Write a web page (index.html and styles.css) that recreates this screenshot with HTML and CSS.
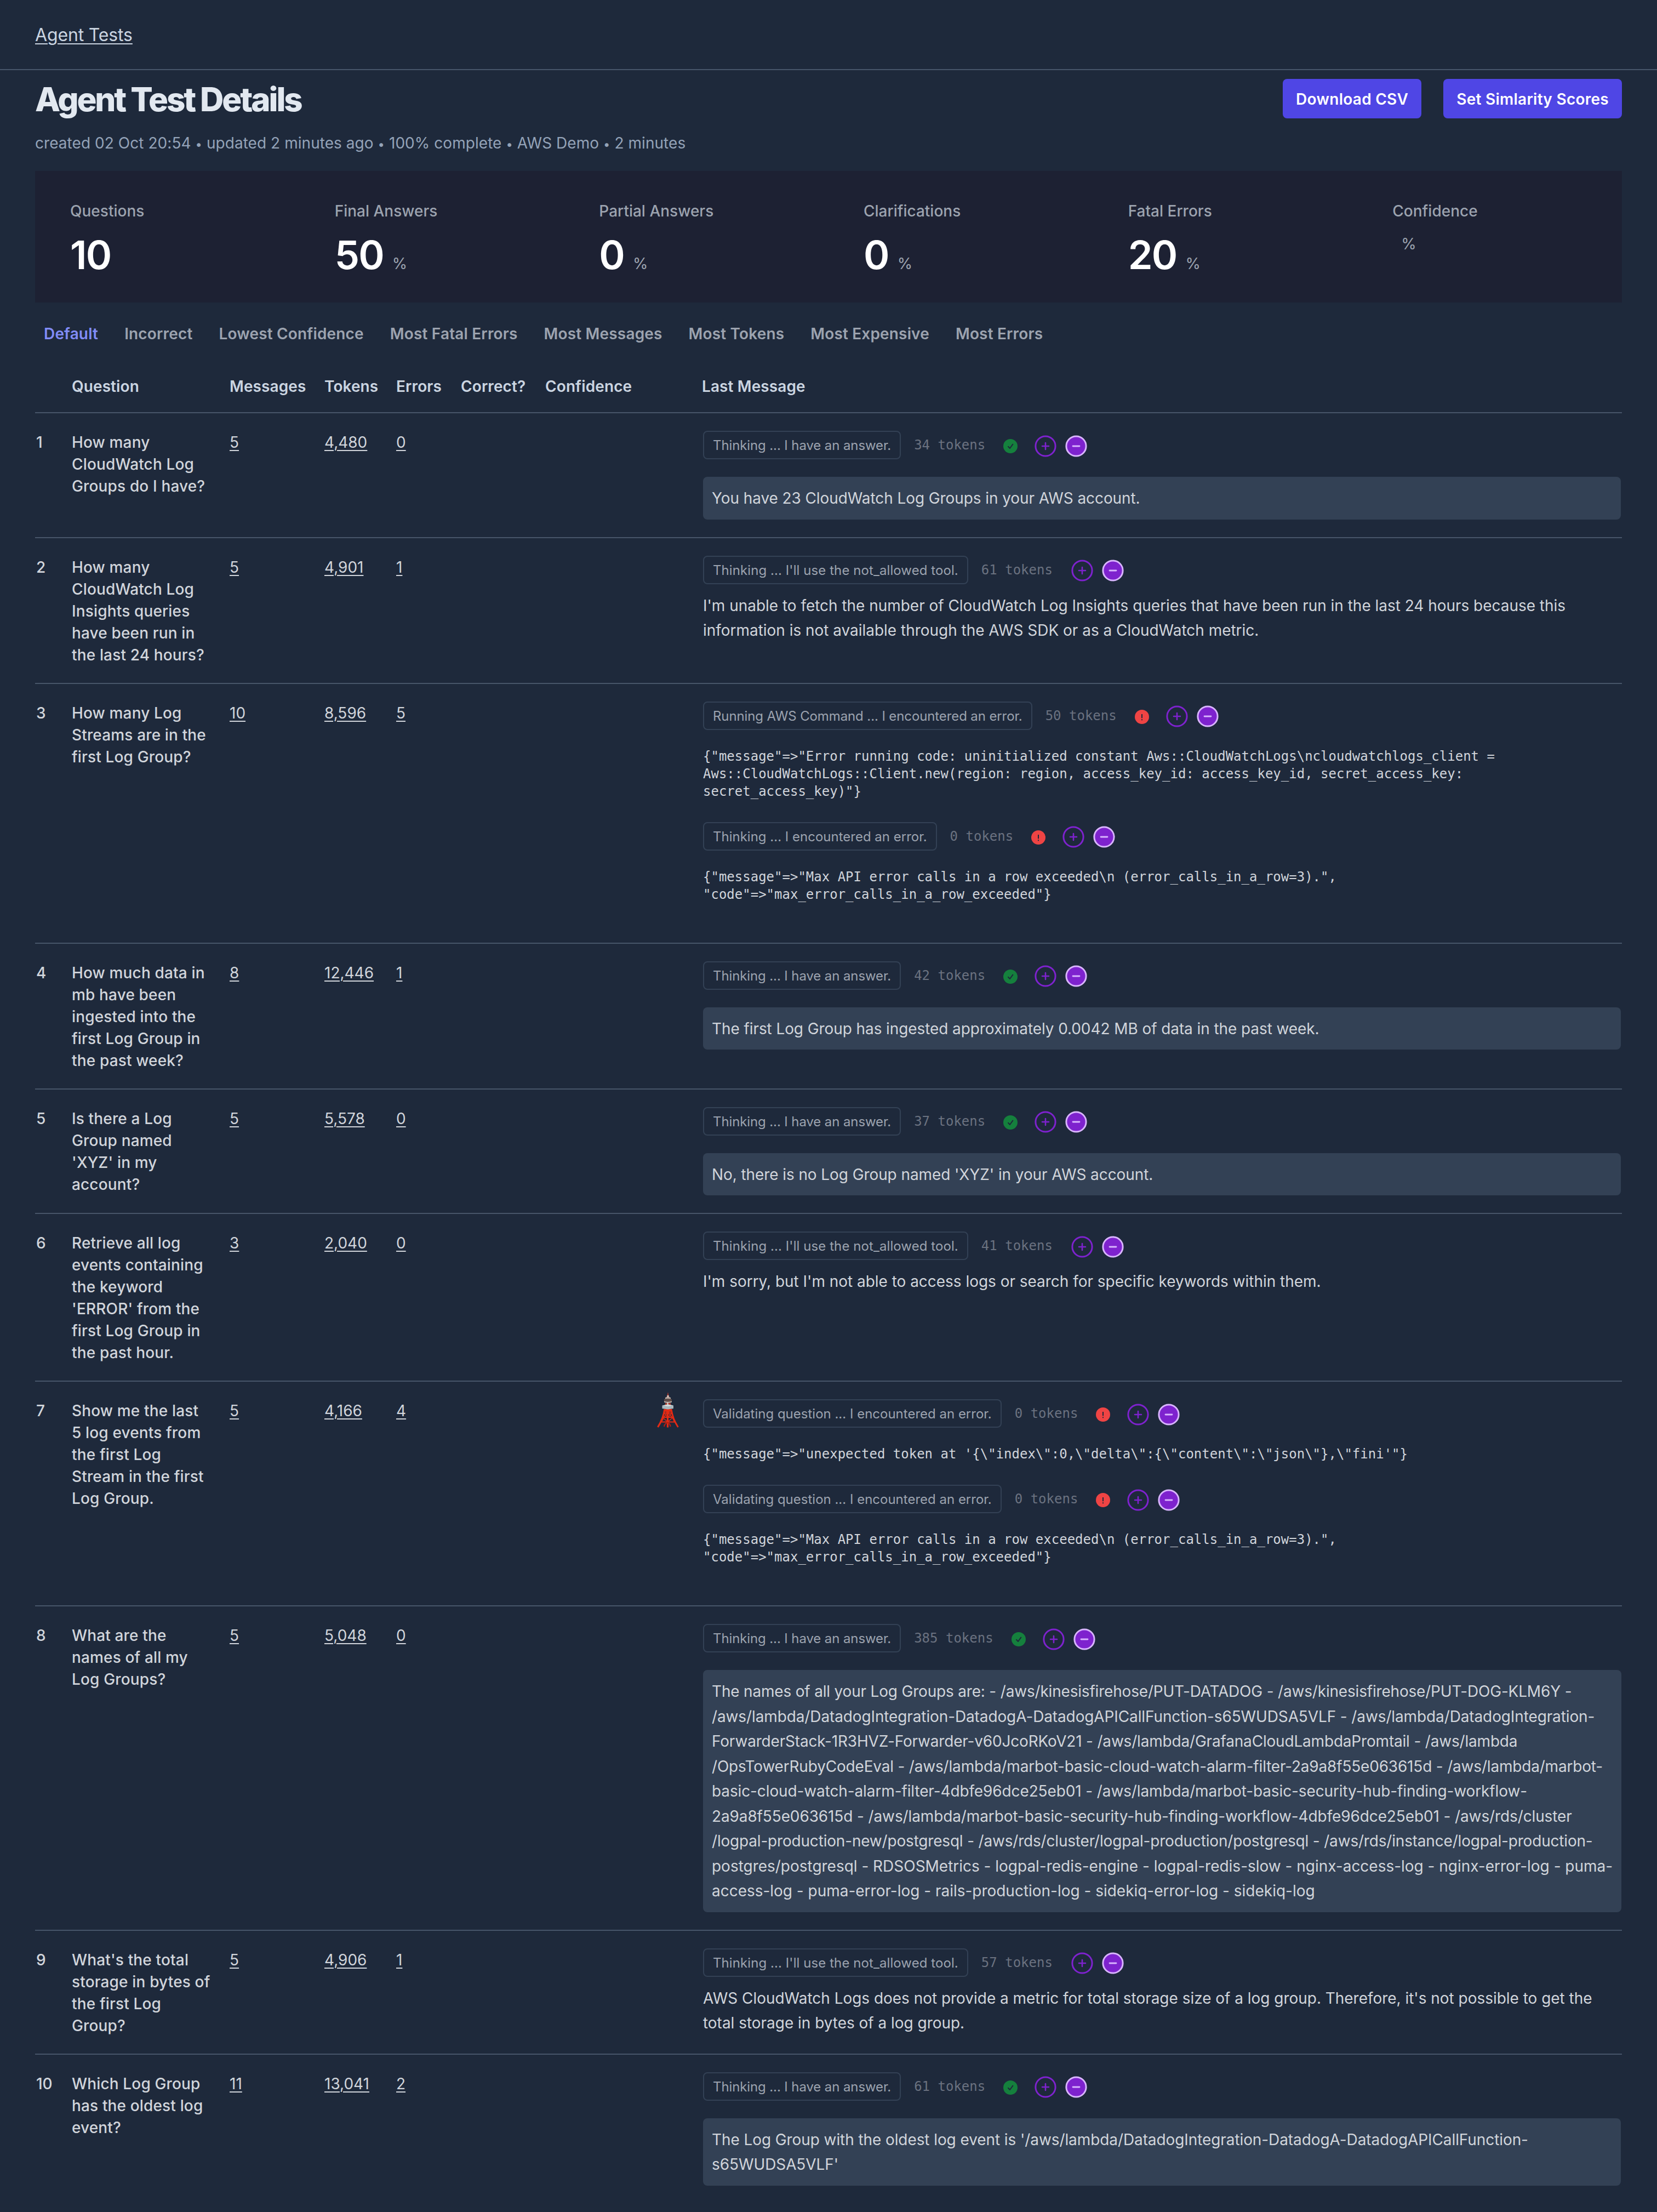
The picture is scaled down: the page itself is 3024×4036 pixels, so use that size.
FILE: index.html
```html
<!DOCTYPE html>
<html lang="en">
<head>
<meta charset="utf-8">
<title>Agent Test Details</title>
<link rel="stylesheet" href="styles.css">
</head>
<body>
<svg class="sprite" aria-hidden="true">
  <symbol id="check" viewBox="0 0 26 26"><circle cx="13" cy="13" r="13" fill="#15803d"/><path d="M9 13.8 12 17 17.3 9.6" fill="none" stroke="#1e293b" stroke-width="2" stroke-linecap="round" stroke-linejoin="round"/></symbol>
  <symbol id="alert" viewBox="0 0 26 26"><circle cx="13" cy="13" r="13" fill="#ef4444"/><path d="M13 8v7.2M13 17.2v2" fill="none" stroke="#1e293b" stroke-width="2"/></symbol>
  <symbol id="plus" viewBox="0 0 40 40"><circle cx="20" cy="20" r="18.1" fill="none" stroke="#7e22ce" stroke-width="3"/><path d="M14 20h12M20 14v12" fill="none" stroke="#7e22ce" stroke-width="2.6" stroke-linecap="round"/></symbol>
  <symbol id="minus" viewBox="0 0 40 40"><circle cx="20" cy="20" r="18.1" fill="#7e22ce" stroke="#d8b4fe" stroke-width="3"/><path d="M14 20h12" fill="none" stroke="#d8b4fe" stroke-width="2.8" stroke-linecap="round"/></symbol>
</svg>

<header class="topbar"><a class="link" href="#">Agent Tests</a></header>

<main class="page">
  <div class="heading">
    <h1 class="title">Agent Test Details</h1>
    <div class="actions">
      <a class="button" href="#">Download CSV</a>
      <a class="button" href="#">Set Simlarity Scores</a>
    </div>
  </div>
  <p class="meta">created 02 Oct 20:54 <span class="dot">•</span> updated 2 minutes ago <span class="dot">•</span> 100% complete <span class="dot">•</span> AWS Demo <span class="dot">•</span> 2 minutes</p>

  <section class="stats">
    <div class="stat"><p class="label">Questions</p><p class="figure"><span class="value">10</span></p></div>
    <div class="stat"><p class="label">Final Answers</p><p class="figure"><span class="value">50</span><span class="unit">%</span></p></div>
    <div class="stat"><p class="label">Partial Answers</p><p class="figure"><span class="value">0</span><span class="unit">%</span></p></div>
    <div class="stat"><p class="label">Clarifications</p><p class="figure"><span class="value">0</span><span class="unit">%</span></p></div>
    <div class="stat"><p class="label">Fatal Errors</p><p class="figure"><span class="value">20</span><span class="unit">%</span></p></div>
    <div class="stat"><p class="label">Confidence</p><p class="figure"><span class="unit">%</span></p></div>
  </section>

  <nav class="sorts">
    <a class="active">Default</a><a>Incorrect</a><a>Lowest Confidence</a><a>Most Fatal Errors</a><a>Most Messages</a><a>Most Tokens</a><a>Most Expensive</a><a>Most Errors</a>
  </nav>

  <section class="table">
    <div class="row head">
      <span></span><span>Question</span><span>Messages</span><span>Tokens</span><span>Errors</span><span>Correct?</span><span>Confidence</span><span></span><span>Last Message</span>
    </div>

    <div class="row">
      <span class="num">1</span><p class="question">How many<br>CloudWatch Log<br>Groups do I have?</p>
      <span><a class="link">5</a></span><span><a class="link">4,480</a></span><span><a class="link">0</a></span><span></span><span></span><span></span>
      <div class="last">
        <div class="status"><span class="badge done">Thinking ... I have an answer.</span><span class="tokens">34 tokens</span><svg class="state"><use href="#check"/></svg><svg class="vote"><use href="#plus"/></svg><svg class="vote"><use href="#minus"/></svg></div>
        <p class="answer">You have 23 CloudWatch Log Groups in your AWS account.</p>
      </div>
    </div>

    <div class="row">
      <span class="num">2</span><p class="question">How many<br>CloudWatch Log<br>Insights queries<br>have been run in<br>the last 24 hours?</p>
      <span><a class="link">5</a></span><span><a class="link">4,901</a></span><span><a class="link">1</a></span><span></span><span></span><span></span>
      <div class="last">
        <div class="status"><span class="badge tool">Thinking ... I'll use the not_allowed tool.</span><span class="tokens">61 tokens</span><svg class="vote"><use href="#plus"/></svg><svg class="vote"><use href="#minus"/></svg></div>
        <p class="plain">I'm unable to fetch the number of CloudWatch Log Insights queries that have been run in the last 24 hours because this<br>information is not available through the AWS SDK or as a CloudWatch metric.</p>
      </div>
    </div>

    <div class="row">
      <span class="num">3</span><p class="question">How many Log<br>Streams are in the<br>first Log Group?</p>
      <span><a class="link">10</a></span><span><a class="link">8,596</a></span><span><a class="link">5</a></span><span></span><span></span><span></span>
      <div class="last">
        <div class="status"><span class="badge done">Running AWS Command ... I encountered an error.</span><span class="tokens">50 tokens</span><svg class="state"><use href="#alert"/></svg><svg class="vote"><use href="#plus"/></svg><svg class="vote"><use href="#minus"/></svg></div>
        <pre class="trace">{"message"=&gt;"Error running code: uninitialized constant Aws::CloudWatchLogs\ncloudwatchlogs_client =
Aws::CloudWatchLogs::Client.new(region: region, access_key_id: access_key_id, secret_access_key:
secret_access_key)"}</pre>
        <div class="status"><span class="badge">Thinking ... I encountered an error.</span><span class="tokens">0 tokens</span><svg class="state"><use href="#alert"/></svg><svg class="vote"><use href="#plus"/></svg><svg class="vote"><use href="#minus"/></svg></div>
        <pre class="trace">{"message"=&gt;"Max API error calls in a row exceeded\n (error_calls_in_a_row=3).",
"code"=&gt;"max_error_calls_in_a_row_exceeded"}</pre>
      </div>
    </div>

    <div class="row">
      <span class="num">4</span><p class="question">How much data in<br>mb have been<br>ingested into the<br>first Log Group in<br>the past week?</p>
      <span><a class="link">8</a></span><span><a class="link">12,446</a></span><span><a class="link">1</a></span><span></span><span></span><span></span>
      <div class="last">
        <div class="status"><span class="badge done">Thinking ... I have an answer.</span><span class="tokens">42 tokens</span><svg class="state"><use href="#check"/></svg><svg class="vote"><use href="#plus"/></svg><svg class="vote"><use href="#minus"/></svg></div>
        <p class="answer">The first Log Group has ingested approximately 0.0042 MB of data in the past week.</p>
      </div>
    </div>

    <div class="row">
      <span class="num">5</span><p class="question">Is there a Log<br>Group named<br>'XYZ' in my<br>account?</p>
      <span><a class="link">5</a></span><span><a class="link">5,578</a></span><span><a class="link">0</a></span><span></span><span></span><span></span>
      <div class="last">
        <div class="status"><span class="badge done">Thinking ... I have an answer.</span><span class="tokens">37 tokens</span><svg class="state"><use href="#check"/></svg><svg class="vote"><use href="#plus"/></svg><svg class="vote"><use href="#minus"/></svg></div>
        <p class="answer">No, there is no Log Group named 'XYZ' in your AWS account.</p>
      </div>
    </div>

    <div class="row">
      <span class="num">6</span><p class="question">Retrieve all log<br>events containing<br>the keyword<br>'ERROR' from the<br>first Log Group in<br>the past hour.</p>
      <span><a class="link">3</a></span><span><a class="link">2,040</a></span><span><a class="link">0</a></span><span></span><span></span><span></span>
      <div class="last">
        <div class="status"><span class="badge tool">Thinking ... I'll use the not_allowed tool.</span><span class="tokens">41 tokens</span><svg class="vote"><use href="#plus"/></svg><svg class="vote"><use href="#minus"/></svg></div>
        <p class="plain">I'm sorry, but I'm not able to access logs or search for specific keywords within them.</p>
      </div>
    </div>

    <div class="row">
      <span class="num">7</span><p class="question">Show me the last<br>5 log events from<br>the first Log<br>Stream in the first<br>Log Group.</p>
      <span><a class="link">5</a></span><span><a class="link">4,166</a></span><span><a class="link">4</a></span><span></span><span></span>
      <span><svg class="tower" viewBox="0 0 40 65">
        <path d="M19 6 20 0 21 6 23 10H17z" fill="#e8452f"/>
        <path d="M18.4 6h3.2v3h-3.2z" fill="#c9c4c0"/>
        <path d="M15 10Q20 8 25 10V13H15z" fill="#b9afa8"/>
        <path d="M13 13Q20 10.500 27 13V17Q20 19.500 13 17z" fill="#5d4a47"/>
        <path d="M13 16.500Q20 19 27 16.500V18.500Q20 21 13 18.500z" fill="#c2b5ad"/>
        <path d="M15 20h10v6H15z" fill="#a8392c"/><path d="M18.500 19h2v7h-2z" fill="#e3ddd8"/>
        <g fill="none" stroke="#e32a14">
          <path d="M14 31C12 45 8 54 1.500 64M19.500 31V64.500" stroke-width="3.200"/>
          <path d="M26 31C28 45 32 54 38.500 64" stroke-width="2.800"/>
          <path d="M13 38h14M11.500 46H28.500M8 54.500H32" stroke-width="2.200"/>
          <path d="M14 31l5 7-7 8 7-1M26 31l-6 7 8 8-8-1M11 47l8 7M28 47l-8 7M13 38l6 7M27 38l-6 7M8 55l5-9M32 55l-4-9" stroke-width="1.500"/>
          <path d="M13 63q1-6 6-7.500Q24 57 24.500 63" stroke-width="2.200" stroke="#b91c0f"/>
        </g>
        <path d="M14 31h12l.6 5H13.300z" fill="#e32a14"/>
        <path d="M9.500 24.500 20 22.500 30 24.500V30L20 31.500 9.500 30z" fill="#a9b7bd"/><path d="M9.500 24.500 20 22.500 30 24.500 20 26z" fill="#d5dcdd"/>
      </svg></span>
      <div class="last">
        <div class="status"><span class="badge">Validating question ... I encountered an error.</span><span class="tokens">0 tokens</span><svg class="state"><use href="#alert"/></svg><svg class="vote"><use href="#plus"/></svg><svg class="vote"><use href="#minus"/></svg></div>
        <pre class="trace">{"message"=&gt;"unexpected token at '{\"index\":0,\"delta\":{\"content\":\"json\"},\"fini'"}</pre>
        <div class="status"><span class="badge">Validating question ... I encountered an error.</span><span class="tokens">0 tokens</span><svg class="state"><use href="#alert"/></svg><svg class="vote"><use href="#plus"/></svg><svg class="vote"><use href="#minus"/></svg></div>
        <pre class="trace">{"message"=&gt;"Max API error calls in a row exceeded\n (error_calls_in_a_row=3).",
"code"=&gt;"max_error_calls_in_a_row_exceeded"}</pre>
      </div>
    </div>

    <div class="row">
      <span class="num">8</span><p class="question">What are the<br>names of all my<br>Log Groups?</p>
      <span><a class="link">5</a></span><span><a class="link">5,048</a></span><span><a class="link">0</a></span><span></span><span></span><span></span>
      <div class="last">
        <div class="status"><span class="badge done">Thinking ... I have an answer.</span><span class="tokens">385 tokens</span><svg class="state"><use href="#check"/></svg><svg class="vote"><use href="#plus"/></svg><svg class="vote"><use href="#minus"/></svg></div>
        <p class="answer long">The names of all your Log Groups are: - /aws/kinesisfirehose/PUT-DATADOG - /aws/kinesisfirehose/PUT-DOG-KLM6Y -<br><span class="loose">/aws/lambda/DatadogIntegration-DatadogA-DatadogAPICallFunction-s65WUDSA5VLF - /aws/lambda/DatadogIntegration-</span><br>ForwarderStack-1R3HVZ-Forwarder-v60JcoRKoV21 - /aws/lambda/GrafanaCloudLambdaPromtail - /aws/lambda<br>/OpsTowerRubyCodeEval - /aws/lambda/marbot-basic-cloud-watch-alarm-filter-2a9a8f55e063615d - /aws/lambda/marbot-<br><span class="loose">basic-cloud-watch-alarm-filter-4dbfe96dce25eb01 - /aws/lambda/marbot-basic-security-hub-finding-workflow-<br>2a9a8f55e063615d - /aws/lambda/marbot-basic-security-hub-finding-workflow-4dbfe96dce25eb01 - /aws/rds/cluster</span><br>/logpal-production-new/postgresql - /aws/rds/cluster/logpal-production/postgresql - /aws/rds/instance/logpal-production-<br><span class="looser">postgres/postgresql - RDSOSMetrics - logpal-redis-engine - logpal-redis-slow - nginx-access-log - nginx-error-log - puma-<br>access-log - puma-error-log - rails-production-log - sidekiq-error-log - sidekiq-log</span></p>
      </div>
    </div>

    <div class="row">
      <span class="num">9</span><p class="question">What's the total<br>storage in bytes of<br>the first Log<br>Group?</p>
      <span><a class="link">5</a></span><span><a class="link">4,906</a></span><span><a class="link">1</a></span><span></span><span></span><span></span>
      <div class="last">
        <div class="status"><span class="badge tool">Thinking ... I'll use the not_allowed tool.</span><span class="tokens">57 tokens</span><svg class="vote"><use href="#plus"/></svg><svg class="vote"><use href="#minus"/></svg></div>
        <p class="plain">AWS CloudWatch Logs does not provide a metric for total storage size of a log group. Therefore, it's not possible to get the<br>total storage in bytes of a log group.</p>
      </div>
    </div>

    <div class="row">
      <span class="num">10</span><p class="question">Which Log Group<br>has the oldest log<br>event?</p>
      <span><a class="link">11</a></span><span><a class="link">13,041</a></span><span><a class="link">2</a></span><span></span><span></span><span></span>
      <div class="last">
        <div class="status"><span class="badge done">Thinking ... I have an answer.</span><span class="tokens">61 tokens</span><svg class="state"><use href="#check"/></svg><svg class="vote"><use href="#plus"/></svg><svg class="vote"><use href="#minus"/></svg></div>
        <p class="answer">The Log Group with the oldest log event is '/aws/lambda/DatadogIntegration-DatadogA-DatadogAPICallFunction-<br>s65WUDSA5VLF'</p>
      </div>
    </div>
  </section>
</main>
</body>
</html>
```
FILE: styles.css
```css
* { box-sizing: border-box; margin: 0; }
html { background: #1e293b; }
body {
  background: #1e293b;
  color: #d1d5db;
  font: 400 28px/40px Inter, sans-serif;
  height: 4036px;
  overflow: hidden;
}
.sprite { display: none; }
svg { display: block; flex: none; }

.link {
  color: inherit;
  text-decoration: underline;
  text-decoration-thickness: 2px;
  text-underline-offset: 4px;
}
.topbar {
  height: 128px;
  padding: 40px 64px;
  border-bottom: 2px solid #475569;
  color: #cbd5e1;
  font-size: 32px;
  line-height: 48px;
  letter-spacing: -0.15px;
}
.page { padding: 16px 64px 0; }

.heading { display: flex; justify-content: space-between; height: 72px; }
.title { padding-top: 1px; color: #e2e8f0; font-size: 60px; line-height: 72px; font-weight: 800; letter-spacing: -3.1px; }
.actions { display: flex; gap: 40px; }
.button {
  padding: 17px 24px 15px;
  border-radius: 8px;
  background: #4f46e5;
  color: #fff;
  font-weight: 600;
  letter-spacing: 0.26px;
  text-decoration: none;
}
.meta { height: 40px; margin-top: 25px; color: #94a3b8; letter-spacing: 0.05px; }
.dot { font-size: 22px; line-height: 0; }

.stats {
  display: grid;
  grid-template-columns: repeat(6, 1fr);
  margin-top: 31px;
  background: #1d2133;
}
.stat { height: 240px; padding: 49px 64px 47px; }
.label { color: #9ca3af; font-weight: 500; line-height: 48px; }
.figure { display: flex; align-items: baseline; margin-top: 16px; }
.value { color: #fff; font-size: 72px; line-height: 80px; font-weight: 600; letter-spacing: -0.025em; }
.unit { margin-left: 16px; color: #9ca3af; }

.sorts {
  display: flex;
  gap: 48px;
  padding: 37px 16px 0;
  color: #9ca3af;
  font-weight: 600;
  letter-spacing: 0.16px;
}
.sorts .active { color: #818cf8; }

.table { margin-top: 31px; }
.row {
  display: grid;
  grid-template-columns: 67px 288px 173px 131px 118px 154px 204px 82px 1fr;
  padding: 33px 0 31px;
  border-bottom: 2px solid #475569;
  white-space: nowrap;
}
.row:last-child { border-bottom: 0; }
.head { padding: 25px 0 27px; color: #cbd5e1; font-weight: 600; letter-spacing: 0.1px; }
.num { padding-left: 2px; font-weight: 500; }
.question { font-weight: 500; letter-spacing: 0.15px; }

.last { margin: -1px 0 1px; padding: 0 2px; }
.status { display: flex; align-items: center; }
.badge {
  height: 52px;
  padding: 0 16px;
  border: 2px solid #334155;
  border-radius: 8px;
  color: #9ca3af;
  font-size: 24px;
  line-height: 49px;
}
.badge.done { letter-spacing: -0.11px; }
.badge.tool { letter-spacing: 0.08px; }
.tokens { margin: 0 34px 0 24px; color: #6b7280; font: 24px/32px "DejaVu Sans Mono", monospace; }
.state { width: 26px; height: 26px; margin: 4px 31px 0 -1px; }
.vote { width: 40px; height: 40px; margin-top: 3px; }
.vote + .vote { margin-left: 16px; }
.answer {
  margin-top: 32px;
  padding: 17px 16px 15px;
  border-radius: 8px;
  background: #334155;
  line-height: 45.5px;
  letter-spacing: -0.09px;
}
.answer.long { letter-spacing: -0.19px; }
.answer .loose { letter-spacing: -0.12px; }
.answer .looser { letter-spacing: -0.02px; }
.plain { margin: 17px 0 -1px; line-height: 45.5px; letter-spacing: -0.03px; }
.trace { padding: 32px 0 40px; font: 24px/32px "DejaVu Sans Mono", monospace; }
.tower { width: 40px; height: 65px; margin: -14px 0 -11px; }
```
